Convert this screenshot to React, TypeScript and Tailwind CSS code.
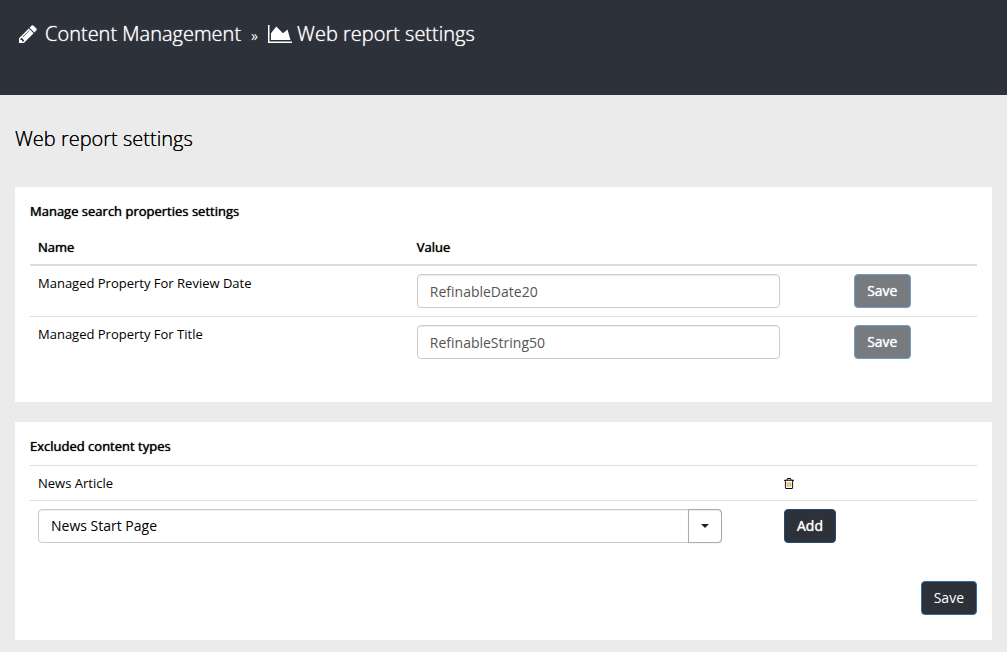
import { useState } from 'react';
import type { ReactNode } from 'react';

function PencilIcon() {
  return (
    <svg viewBox="128 128 1536 1536" className="size-[18px] fill-current" aria-hidden="true">
      <path d="M491 1536l91-91-235-235-91 91v107h128v128h107zm523-928q0-22-22-22-10 0-17 7l-542 542q-7 7-7 17 0 22 22 22 10 0 17-7l542-542q7-7 7-17zm-54-192l416 416-832 832h-416v-416l832-832zm683 96q0 53-37 90l-166 166-416-416 166-165q36-38 90-38 53 0 91 38l235 234q37 39 37 91z" />
    </svg>
  );
}

function AreaChartIcon() {
  return (
    <svg viewBox="128 128 2048 1536" className="h-[18px] w-6 fill-current" aria-hidden="true">
      <path d="M2176 1536v128h-2048v-1536h128v1408h1920zM1792 512l256 896h-1664v-576l448-576 576 576z" />
    </svg>
  );
}

function TrashIcon() {
  return (
    <svg viewBox="192 128 1408 1536" className="h-[11px] w-[10px] fill-current" aria-hidden="true">
      <path fill="#e08a1a" d="M704 736v576q0 14-9 23t-23 9h-64q-14 0-23-9t-9-23v-576q0-14 9-23t23-9h64q14 0 23 9t9 23zm256 0v576q0 14-9 23t-23 9h-64q-14 0-23-9t-9-23v-576q0-14 9-23t23-9h64q14 0 23 9t9 23zm256 0v576q0 14-9 23t-23 9h-64q-14 0-23-9t-9-23v-576q0-14 9-23t23-9h64q14 0 23 9t9 23z" />
      <path d="M1344 1460v-948h-896v948q0 22 7 40.5t14.5 27 10.5 8.5h832q3 0 10.5-8.5t14.5-27 7-40.5zm-672-1076h448l-48-117q-7-9-17-11h-317q-10 2-17 11zm928 32v64q0 14-9 23t-23 9h-96v948q0 83-47 143.5t-113 60.5h-832q-66 0-113-58.5t-47-141.5v-952h-96q-14 0-23-9t-9-23v-64q0-14 9-23t23-9h309l70-167q15-37 54-63t79-26h320q40 0 79 26t54 63l70 167h309q14 0 23 9t9 23z" />
    </svg>
  );
}

function Panel({ title, children }: { title: string; children: ReactNode }) {
  return (
    <section className="bg-white px-[15px] pt-[15px]">
      <h2 className="text-[13px] leading-[18px] [text-shadow:0_0_1px_currentColor]">{title}</h2>
      {children}
    </section>
  );
}

const properties = [
  { id: 'review-date', label: 'Managed Property For Review Date', value: 'RefinableDate20' },
  { id: 'title', label: 'Managed Property For Title', value: 'RefinableString50' },
];

export default function App() {
  const [values, setValues] = useState(properties.map((p) => p.value));

  return (
    <div className="min-h-screen bg-[#ebebeb] pb-3 font-['Open_Sans',sans-serif] text-[13px] leading-[18px] text-black">
      <header className="min-h-[95px] bg-[#2d3139] px-[19px] pt-5 text-white">
        <nav aria-label="Breadcrumb" className="flex items-center text-xl leading-7 font-light">
          <a href="#content" className="flex items-center gap-2 [text-shadow:0_0_1px_currentColor]">
            <PencilIcon />
            Content Management
          </a>
          <span className="px-[10px] pt-1 text-sm leading-6 font-normal">»</span>
          <a href="#report" className="flex items-center gap-[5px] [text-shadow:0_0_1px_currentColor]">
            <AreaChartIcon />
            Web report settings
          </a>
        </nav>
      </header>

      <main className="flex flex-col gap-5 px-[15px]">
        <h1 className="pt-[30px] pb-[14px] text-xl leading-7 font-light [text-shadow:0_0_0_currentColor]">
          Web report settings
        </h1>

        <Panel title="Manage search properties settings">
          <table className="mt-[9px] w-full table-fixed border-collapse text-left">
            <colgroup>
              <col className="w-2/5" />
              <col className="w-2/5" />
              <col className="w-1/5" />
            </colgroup>
            <thead>
              <tr className="border-b-2 border-[#ddd]">
                <th className="px-2 pt-[9px] pb-2 font-normal [text-shadow:0_0_1px_currentColor]">Name</th>
                <th className="px-2 pt-[9px] pb-2 font-normal [text-shadow:0_0_1px_currentColor]">Value</th>
                <td />
              </tr>
            </thead>
            <tbody>
              {properties.map((p, i) => (
                <tr key={p.id} className="border-b border-[#ddd] last:border-b-0">
                  <td className="p-2 align-top">
                    <label htmlFor={p.id}>{p.label}</label>
                  </td>
                  <td className="p-2">
                    <input
                      id={p.id}
                      type="text"
                      value={values[i]}
                      onChange={(e) => setValues(values.map((v, n) => (n === i ? e.target.value : v)))}
                      className="block h-[34px] w-full rounded border border-[#ccc] px-3 text-sm text-[#555] shadow-[inset_0_1px_1px_rgba(0,0,0,0.075)]"
                    />
                  </td>
                  <td className="p-2 text-center">
                    <button
                      type="button"
                      disabled
                      className="h-[34px] w-[57px] rounded border border-[#6f9ec8] bg-[#777a7f] align-top text-sm text-white [text-shadow:0_0_1px_currentColor]"
                    >
                      Save
                    </button>
                  </td>
                </tr>
              ))}
            </tbody>
          </table>
          <div className="h-[35px]" />
        </Panel>

        <Panel title="Excluded content types">
          <table className="mt-[10px] w-full table-fixed border-collapse border-t border-[#ddd] text-left">
            <colgroup>
              <col />
              <col className="w-[201px]" />
            </colgroup>
            <tbody>
              <tr className="border-b border-[#ddd]">
                <td className="p-2">News Article</td>
                <td className="p-2">
                  <button type="button" aria-label="Delete" className="block">
                    <TrashIcon />
                  </button>
                </td>
              </tr>
              <tr>
                <td className="py-2 pr-[54px] pl-2">
                  <div className="grid grid-cols-[1fr_34px]">
                    <select
                      aria-label="Content type"
                      className="col-span-2 col-start-1 row-start-1 h-[34px] w-full appearance-none rounded border border-[#ccc] bg-white px-3 text-sm shadow-[inset_0_1px_1px_rgba(0,0,0,0.075)]"
                    >
                      <option>News Start Page</option>
                      <option>News Article</option>
                    </select>
                    <span className="pointer-events-none col-start-2 row-start-1 flex items-center justify-center rounded-r border border-[#aaa] shadow-[0_1px_2px_rgba(0,0,0,0.05)]">
                      <svg viewBox="0 0 8 4" className="h-1 w-2 fill-[#222]" aria-hidden="true">
                        <path d="M0 0h8L4 4z" />
                      </svg>
                    </span>
                  </div>
                </td>
                <td className="p-2">
                  <button
                    type="button"
                    className="block h-[34px] rounded border border-[#204d74] bg-[#2d3139] px-3 text-sm text-white [text-shadow:0_0_1px_currentColor]"
                  >
                    Add
                  </button>
                </td>
              </tr>
            </tbody>
          </table>
          <div className="flex justify-end pt-[30px] pb-[25px]">
            <button
              type="button"
              className="h-[34px] rounded border border-[#2e6da4] bg-[#2d3139] px-3 text-sm text-white"
            >
              Save
            </button>
          </div>
        </Panel>
      </main>
    </div>
  );
}
